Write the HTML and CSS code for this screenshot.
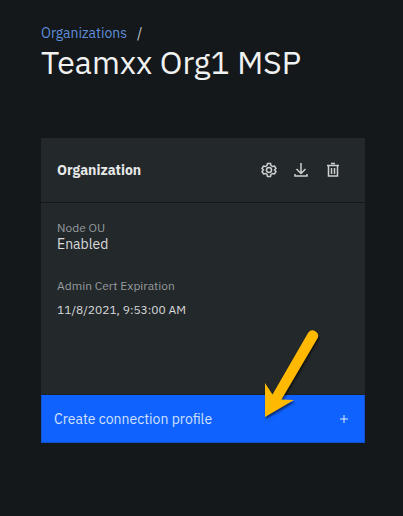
FILE: index.html
```html
<!DOCTYPE html>
<html lang="en">
<head>
<meta charset="utf-8">
<meta name="viewport" content="width=device-width, initial-scale=1">
<title>Teamxx Org1 MSP</title>
<link rel="stylesheet" href="styles.css">
</head>
<body>
<main class="page">
  <nav class="breadcrumb" aria-label="Breadcrumb"><a href="#">Organizations</a><span>/</span></nav>
  <h1 class="title">Teamxx Org1 MSP</h1>
  <section class="card">
    <header class="card-header">
      <h2 class="card-title">Organization</h2>
      <div class="actions">
        <button class="icon-button" type="button" aria-label="Settings">
          <svg viewBox="0 0 32 32"><path d="M13 3h6l1 4 3 2 4-1 3 5-3 3 3 3-3 5-4-1-3 2-1 4h-6l-1-4-3-2-4 1-3-5 3-3-3-3 3-5 4 1 3-2z"/><circle cx="16" cy="16" r="5"/></svg>
        </button>
        <button class="icon-button" type="button" aria-label="Download">
          <svg viewBox="0 0 32 32"><path d="M16 2v21M7 14l9 9 9-9M4 24v4h24v-4"/></svg>
        </button>
        <button class="icon-button" type="button" aria-label="Delete">
          <svg viewBox="0 0 32 32"><path d="M12 3h8M4 7h24M7 7v21h18V7M13 12v12M19 12v12"/></svg>
        </button>
      </div>
    </header>
    <dl class="details">
      <div class="detail">
        <dt>Node OU</dt>
        <dd>Enabled</dd>
      </div>
      <div class="detail">
        <dt>Admin Cert Expiration</dt>
        <dd class="date">11/8/2021, 9:53:00 AM</dd>
      </div>
    </dl>
    <button class="create" type="button"><span>Create connection profile</span>
      <svg class="plus" viewBox="0 0 8 8"><path d="M4 0v8M0 4h8"/></svg>
    </button>
    <svg class="arrow" viewBox="0 0 64 96" aria-hidden="true"><path d="M48.300 7.500A5.500 5.500 0 0 1 57.700 13L21.500 74.500L34 75L5 92V58L12.500 69.500Z"/></svg>
  </section>
</main>
</body>
</html>
```
FILE: styles.css
```css
* {
  box-sizing: border-box;
}

body {
  margin: 0;
  min-height: 100vh;
  background: #14181a;
  color: #f0f1f1;
  font-family: "IBM Plex Sans", Roboto, "Noto Sans", sans-serif;
}

.page {
  padding: 24px 38px 24px 41px;
}

.breadcrumb {
  display: flex;
  gap: 10px;
  font-size: 14px;
  line-height: 18px;
  color: #c6c9ca;
}

.breadcrumb a {
  color: #5f8edb;
  text-decoration: none;
}

.title {
  margin: 0;
  font-size: 32px;
  font-weight: 400;
  line-height: 40px;
}

.card {
  position: relative;
  margin-top: 56px;
  background: #23282b;
}

.card-header {
  display: flex;
  align-items: center;
  justify-content: space-between;
  height: 65px;
  padding: 0 16px;
  border-bottom: 1px solid #14181a;
}

.card-title {
  margin: 0;
  color: #e6e8e8;
  font-size: 14px;
  font-weight: 700;
  line-height: 20px;
}

.actions {
  display: flex;
}

.icon-button {
  display: flex;
  padding: 8px;
  border: 0;
  background: none;
}

.icon-button svg {
  width: 16px;
  height: 16px;
  fill: none;
  stroke: #cdd0d1;
  stroke-width: 3;
}

.details {
  min-height: 192px;
  margin: 0;
  padding: 17px 16px;
  border-bottom: 1px solid #1a2027;
}

.detail {
  margin-bottom: 26px;
}

dt {
  color: #969c9f;
  font-size: 12px;
  line-height: 16px;
}

dd {
  margin: 0;
  color: #d9dbdc;
  font-size: 14px;
  line-height: 16px;
}

dd.date {
  margin-top: 8px;
  font-size: 12px;
}

.create {
  display: flex;
  align-items: center;
  justify-content: space-between;
  width: 100%;
  height: 48px;
  padding: 0 16px 0 12px;
  border: 1px solid #1053cd;
  border-top-color: #0f62fe;
  background: #0f62fe;
  color: #cfe0ff;
  font: inherit;
  font-size: 14px;
}

.plus {
  width: 8px;
  height: 8px;
  stroke: #e0eaff;
}

/* Pointer laid over the card, aimed at its main action */
.arrow {
  position: absolute;
  right: 41px;
  bottom: 22px;
  width: 64px;
  height: 96px;
  fill: #ffb900;
  filter: drop-shadow(1px 2px 1px rgb(0 0 0 / 55%));
  pointer-events: none;
}
```
